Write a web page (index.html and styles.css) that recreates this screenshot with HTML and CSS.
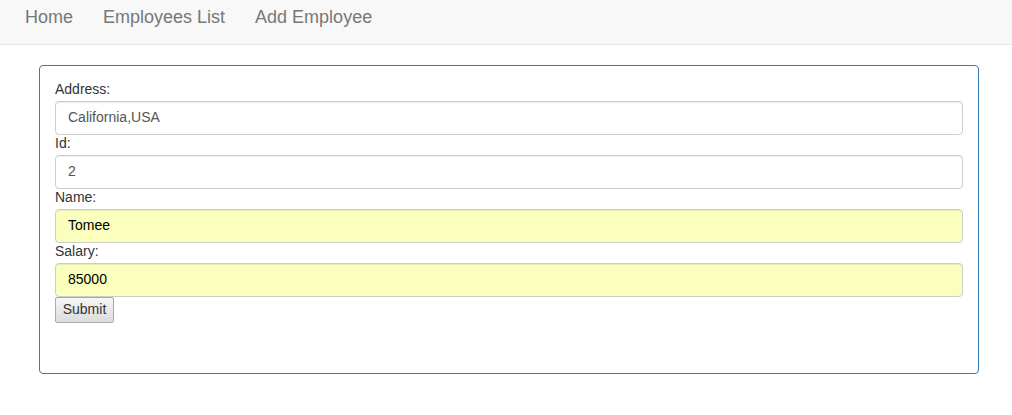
FILE: index.html
```html
<!DOCTYPE html>
<html>
<head>
<meta charset="utf-8">
<link rel="stylesheet" href="styles.css">
</head>
<body>
<nav class="navbar">
  <ul class="nav">
    <li><a href="#">Home</a></li>
    <li><a href="#">Employees List</a></li>
    <li><a href="#">Add Employee</a></li>
  </ul>
</nav>
<div class="panel">
  <form class="form">
    <label class="label">Address:</label>
    <input class="input" type="text" value="California,USA">
    <label class="label">Id:</label>
    <input class="input" type="text" value="2">
    <label class="label">Name:</label>
    <input class="input autofill" type="text" value="Tomee">
    <label class="label">Salary:</label>
    <input class="input autofill" type="text" value="85000">
    <div><button class="btn" type="button">Submit</button></div>
  </form>
</div>
</body>
</html>
```
FILE: styles.css
```css
* { box-sizing: border-box; }
html, body { margin: 0; padding: 0; }
body {
  font-family: "Liberation Sans", Arial, sans-serif;
  font-size: 14px;
  line-height: 20px;
  color: #333;
  background: #fff;
}
.navbar {
  height: 45px;
  background: #f8f8f8;
  border-bottom: 1px solid #e7e7e7;
  padding-left: 10px;
}
.nav {
  list-style: none;
  margin: 0;
  padding: 0;
  display: flex;
}
.nav a {
  display: block;
  padding: 7px 15px 17px;
  font-size: 18px;
  line-height: 20px;
  color: #777;
  text-decoration: none;
}
.panel {
  margin: 20px 0 0 39px;
  width: 940px;
  height: 309px;
  border: 1px solid #337ab7;
  border-radius: 4px;
  padding: 15px 15px;
}
.form { display: flex; flex-direction: column; }
.label {
  display: block;
  height: 20px;
  line-height: 16px;
  color: #333;
}
.input {
  display: block;
  width: 100%;
  height: 34px;
  padding: 5px 12px 7px;
  font-family: "Liberation Sans", Arial, sans-serif;
  font-size: 14px;
  line-height: 20px;
  color: #555;
  background: #fff;
  border: 1px solid #ccc;
  border-radius: 4px;
  box-shadow: inset 0 1px 1px rgba(0,0,0,.075);
  margin: 0;
}
.input.autofill {
  background: #faffbd;
  color: #000;
}
.btn {
  display: block;
  height: 26px;
  width: 59px;
  padding: 0 6px 2px;
  margin: 0;
  font-family: "Liberation Sans", Arial, sans-serif;
  font-size: 14px;
  color: #333;
  background: linear-gradient(#f6f6f6, #dcdcdc);
  border: 1px solid #a9a9a9;
  border-radius: 2px;
}
```
